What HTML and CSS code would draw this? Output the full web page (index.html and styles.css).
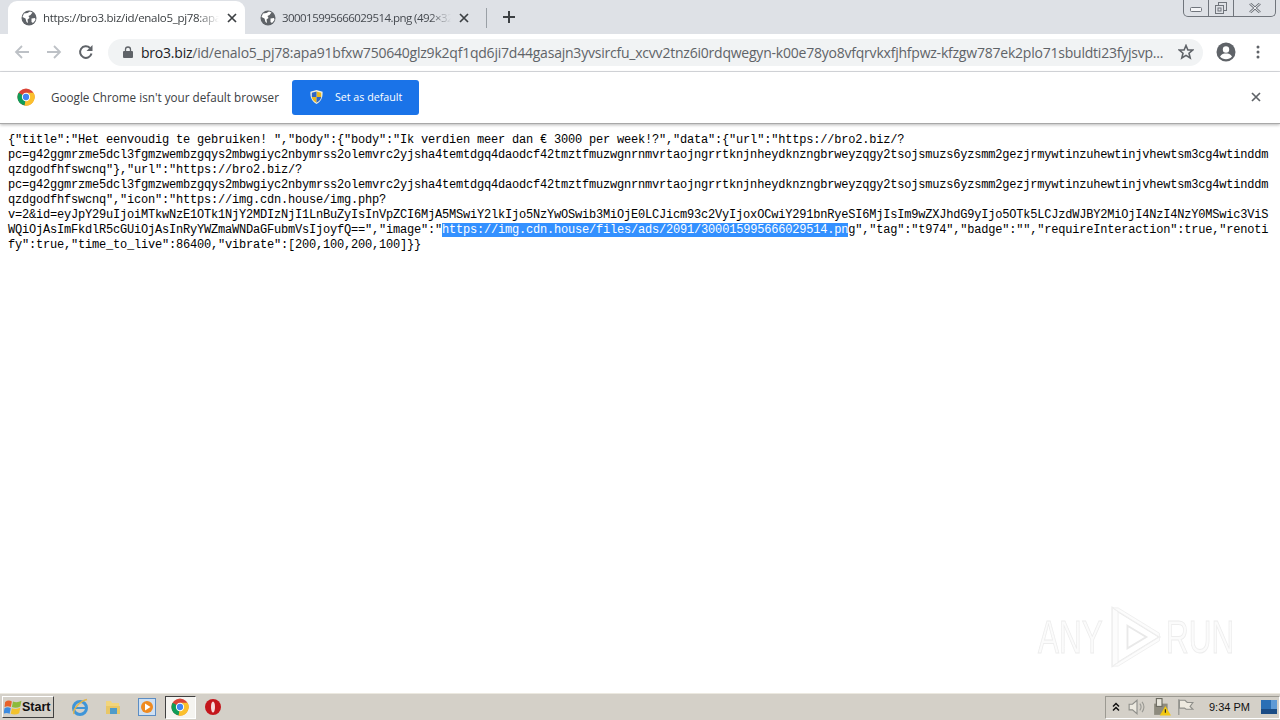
FILE: index.html
```html
<!DOCTYPE html>
<html lang="en">
<head>
<meta charset="utf-8">
<title>Chrome</title>
<link rel="stylesheet" href="styles.css">
</head>
<body>
<svg class="defs" width="0" height="0" aria-hidden="true">
  <defs>
    <symbol id="globe" viewBox="0 0 16 16">
      <circle cx="8" cy="8" r="7.5" fill="#5f6368"/>
      <path d="M3 3.5 6.5 3 9 1.5l2.5 1L9.5 5 7.5 6 8.5 8 6.5 9.5 7 13 5.5 12 4.5 8.5 1.5 7ZM10.5 8.5l3.500-.5.5 2-2.500 3-1.500-1Z" fill="#fff"/>
    </symbol>
    <symbol id="cross" viewBox="0 0 10 10">
      <path d="M1 1 9 9M9 1 1 9" fill="none" stroke="currentColor" stroke-width="1.700"/>
    </symbol>
    <symbol id="chrome" viewBox="0 0 20 20">
      <circle cx="10" cy="10" r="9.500" fill="#db4437"/>
      <path d="M10 10 1.800 5.200A9.500 9.500 0 0 0 8.500 19.400Z" fill="#0f9d58"/>
      <path d="M10 5.200h8.400A9.500 9.500 0 0 1 8.500 19.400L10 10Z" fill="#fbc02d"/>
      <circle cx="10" cy="10" r="4.600" fill="#fff"/>
      <circle cx="10" cy="10" r="3.500" fill="#4285f4"/>
    </symbol>
    <symbol id="shield" viewBox="0 0 16 16">
      <path d="M8 .5 14.500 2.500C14.800 9 12.500 13 8 15.500 3.500 13 1.200 9 1.500 2.500Z" fill="#f4f1e0"/>
      <path d="M8 2 13 3.500V8H8Z" fill="#e8b81e"/>
      <path d="M8 2 3 3.500V8H8Z" fill="#2f66c4"/>
      <path d="M3 8H8V14C5 12.500 3.400 10.500 3 8Z" fill="#e8b81e"/>
      <path d="M13 8H8V14C11 12.500 12.600 10.500 13 8Z" fill="#2f66c4"/>
    </symbol>
  </defs>
</svg>
<div class="screen">
  <header class="tabstrip">
    <div class="tab tab-active">
      <svg class="tab-favicon"><use href="#globe"/></svg>
      <span class="tab-title">https://bro3.biz/id/enalo5_pj78:apa91bfxw750</span>
      <svg class="tab-close"><use href="#cross"/></svg>
    </div>
    <div class="tab tab-idle">
      <svg class="tab-favicon"><use href="#globe"/></svg>
      <span class="tab-title">300015995666029514.png (492×328)</span>
      <svg class="tab-close"><use href="#cross"/></svg>
    </div>
    <span class="tab-sep"></span>
    <svg class="newtab" viewBox="0 0 12 12"><path d="M6 0V12M0 6H12" fill="none" stroke="#3c4043" stroke-width="2"/></svg>
    <div class="winbtns">
      <span class="winbtn winbtn-min"><svg viewBox="0 0 12 6" width="12" height="6"><rect x=".5" y=".5" width="11" height="4" rx="1" fill="#f4f5f7" stroke="#70757c"/></svg></span>
      <span class="winbtn winbtn-max"><svg viewBox="0 0 12 12" width="12" height="12"><rect x="3.500" y=".5" width="8" height="8" fill="none" stroke="#70757c"/><rect x=".5" y="3.500" width="8" height="8" fill="#dee1e6" stroke="#70757c"/><rect x="3" y="6" width="3" height="3" fill="none" stroke="#70757c"/></svg></span>
      <span class="winbtn winbtn-close"><svg viewBox="0 0 12 10" width="12" height="10"><path d="M1 .5 11 9.500M11 .5 1 9.500" fill="none" stroke="#70757c" stroke-width="2.600"/><path d="M1 .5 11 9.500M11 .5 1 9.500" fill="none" stroke="#f4f5f7" stroke-width="1"/></svg></span>
    </div>
  </header>

  <nav class="toolbar">
    <svg class="nav-icon" viewBox="0 0 16 16"><path d="M15 8H2M8 2 2 8l6 6" fill="none" stroke="#bdc1c6" stroke-width="1.800"/></svg>
    <svg class="nav-icon" viewBox="0 0 16 16"><path d="M1 8H14M8 2l6 6-6 6" fill="none" stroke="#bdc1c6" stroke-width="1.800"/></svg>
    <svg class="nav-icon" viewBox="0 0 16 16"><path d="M13.500 9.500A5.800 5.800 0 1 1 12 4" fill="none" stroke="#5f6368" stroke-width="2"/><path d="M14.500 1v6h-6Z" fill="#5f6368"/></svg>
    <div class="omnibox">
      <svg class="lock" viewBox="0 0 10 12"><path d="M2.500 5V3.500a2.500 2.500 0 0 1 5 0V5" fill="none" stroke="#5f6368" stroke-width="1.300"/><rect y="5" width="10" height="7" rx="1" fill="#5f6368"/></svg>
      <span class="url"><span class="url-host">bro3.biz</span>/id/enalo5_pj78:apa91bfxw750640glz9k2qf1qd6ji7d44gasajn3yvsircfu_xcvv2tnz6i0rdqwegyn-k00e78yo8vfqrvkxfjhfpwz-kfzgw787ek2plo71sbuldti23fyjsvp...</span>
      <svg class="star" viewBox="0 0 16 16"><path d="M8 1.500 9.900 6h4.800l-3.700 3.200 1.200 4.800L8 11.400 3.800 14 5 9.200 1.300 6h4.800Z" fill="none" stroke="#5f6368" stroke-width="1.600"/></svg>
    </div>
    <svg class="avatar" viewBox="0 0 20 20"><circle cx="10" cy="10" r="9.500" fill="#5f6368"/><circle cx="10" cy="7.500" r="3.200" fill="#fff"/><path d="M4 14.500c1.500-2.500 3.500-3 6-3s4.500.5 6 3c-1.500 1.800-3.500 2.700-6 2.700s-4.500-.9-6-2.700Z" fill="#fff"/></svg>
    <svg class="kebab" viewBox="0 0 4 14"><circle cx="2" cy="2" r="1.500" fill="#5f6368"/><circle cx="2" cy="7" r="1.500" fill="#5f6368"/><circle cx="2" cy="12" r="1.500" fill="#5f6368"/></svg>
  </nav>

  <section class="infobar">
    <svg class="info-logo"><use href="#chrome"/></svg>
    <span class="info-text">Google Chrome isn't your default browser</span>
    <button class="info-btn"><svg class="info-shield"><use href="#shield"/></svg><span>Set as default</span></button>
    <svg class="info-close"><use href="#cross"/></svg>
  </section>

  <main class="content">
<pre class="json">{"title":"Het eenvoudig te gebruiken! ","body":{"body":"Ik verdien meer dan € 3000 per week!?","data":{"url":"https://bro2.biz/?
pc=g42ggmrzme5dcl3fgmzwembzgqys2mbwgiyc2nbymrss2olemvrc2yjsha4temtdgq4daodcf42tmztfmuzwgnrnmvrtaojngrrtknjnheydknzngbrweyzqgy2tsojsmuzs6yzsmm2gezjrmywtinzuhewtinjvhewtsm3cg4wtinddm
qzdgodfhfswcnq"},"url":"https://bro2.biz/?
pc=g42ggmrzme5dcl3fgmzwembzgqys2mbwgiyc2nbymrss2olemvrc2yjsha4temtdgq4daodcf42tmztfmuzwgnrnmvrtaojngrrtknjnheydknzngbrweyzqgy2tsojsmuzs6yzsmm2gezjrmywtinzuhewtinjvhewtsm3cg4wtinddm
qzdgodfhfswcnq","icon":"https://img.cdn.house/img.php?
v=2&amp;id=eyJpY29uIjoiMTkwNzE1OTk1NjY2MDIzNjI1LnBuZyIsInVpZCI6MjA5MSwiY2lkIjo5NzYwOSwib3MiOjE0LCJicm93c2VyIjoxOCwiY291bnRyeSI6MjIsIm9wZXJhdG9yIjo5OTk5LCJzdWJBY2MiOjI4NzI4NzY0MSwic3ViS
WQiOjAsImFkdlR5cGUiOjAsInRyYWZmaWNDaGFubmVsIjoyfQ==","image":"<mark class="sel">https://img.cdn.house/files/ads/2091/300015995666029514.pn</mark>g","tag":"t974","badge":"","requireInteraction":true,"renoti
fy":true,"time_to_live":86400,"vibrate":[200,100,200,100]}}</pre>
    <div class="watermark">
      <span class="wm-word">ANY</span>
      <svg class="wm-play" viewBox="0 0 56 66"><path d="M4 2 54 33 4 64Z" fill="#fff" stroke="#e9e9e9" stroke-width="2"/><path d="M4 2 10 2 54 29V33ZM4 64 10 64 54 37V33ZM4 2 4 64 10 60 10 6Z" fill="#fcfcfc" stroke="#efefef"/><path d="M20 21 40 33 20 45Z" fill="#fff" stroke="#e9e9e9" stroke-width="2"/></svg>
      <span class="wm-word">RUN</span>
    </div>
  </main>

  <footer class="taskbar">
    <div class="start">
      <svg class="start-flag" viewBox="0 0 16 14"><path d="M1 2.500C3 1 5 1 7 2L6 7C4 6 2.500 6 .5 7Z" fill="#e8622a"/><path d="M8 2C10 3 13 3 15.500 1.500L14.500 6.500C12 8 9.500 8 7 7Z" fill="#8cbb3a"/><path d="M.5 8C2.500 7 4 7 6 8L5 13C3 12 1.500 12-.5 13Z" fill="#3d8be0"/><path d="M7 8C9.500 9 12 9 14.500 7.500L13.500 12.500C11 14 8.500 14 6 13Z" fill="#f3c22d"/></svg>
      <span>Start</span>
    </div>
    <div class="quick">
      <span class="quick-item"><svg viewBox="0 0 18 18"><circle cx="9" cy="10" r="6.500" fill="none" stroke="#3f95d8" stroke-width="3"/><path d="M4 10H15" stroke="#3f95d8" stroke-width="2"/><path d="M3 16C1 12 9 3 16 1.500" fill="none" stroke="#e3b54a" stroke-width="1.500"/></svg></span>
      <span class="quick-item"><svg viewBox="0 0 18 18"><path d="M2 3H7L8 5H15V16H2Z" fill="#f2d57c"/><path d="M2 8H16V16H2Z" fill="#e9c766"/><rect x="6" y="10" width="7" height="6" fill="#4f9bc9"/></svg></span>
      <span class="quick-item"><svg viewBox="0 0 18 18"><rect x=".5" y=".5" width="17" height="17" fill="#cfe0f2" stroke="#5b8dc4"/><circle cx="9" cy="9" r="6" fill="#ef8a1f"/><path d="M7 5.500 12.500 9 7 12.500Z" fill="#fff"/></svg></span>
      <span class="quick-item quick-active"><svg viewBox="0 0 20 20"><use href="#chrome"/></svg></span>
      <span class="quick-item"><svg viewBox="0 0 18 18"><circle cx="9" cy="9" r="8" fill="#c4161c"/><ellipse cx="9" cy="9" rx="2" ry="5.500" fill="#f6dcdc"/></svg></span>
    </div>
    <div class="tray">
      <svg class="tray-chev" viewBox="0 0 8 10"><path d="M1 4.500 4 1.500 7 4.500M1 8.500 4 5.500 7 8.500" fill="none" stroke="#111" stroke-width="1.500"/></svg>
      <svg class="tray-icon" viewBox="0 0 16 16"><path d="M1 5.500H4L8 2V14L4 10.500H1Z" fill="#ece9e0" stroke="#8f8f8a"/><path d="M10.500 5c1.500 2 1.500 4 0 6M12.500 3.500c2.200 3 2.200 6 0 9" fill="none" stroke="#9a9a94"/></svg>
      <svg class="tray-icon" viewBox="0 0 16 16"><rect x="1" y="5" width="12" height="10" fill="#8e8b7e"/><rect x="3" y=".5" width="5" height="7" fill="#e8e6dc" stroke="#6b6a60"/><path d="M11 7 16 15.500H6Z" fill="#f2c811"/><path d="M11 10v3" stroke="#222"/></svg>
      <svg class="tray-icon tray-flag" viewBox="0 0 16 16"><path d="M2.500 1V15" stroke="#8f8f8a"/><path d="M3 2H8L10 4H15L12.500 7.500 15 10H9L7.500 9H3Z" fill="#eeeae0" stroke="#8f8f8a"/></svg>
      <span class="clock">9:34 PM</span>
      <svg class="tray-desk" viewBox="0 0 16 14"><rect width="16" height="14" fill="#2a6fb5"/><rect y="9" width="16" height="5" fill="#1b4c85"/><rect x="10" width="6" height="9" fill="#5e9ad6"/></svg>
    </div>
  </footer>
</div>
</body>
</html>
```
FILE: styles.css
```css
* { box-sizing: border-box; }
html, body { margin: 0; padding: 0; }
body { font-family: "Open Sans", "Liberation Sans", sans-serif; background: #fff; overflow: hidden; }
.defs { display: block; height: 0; }
.screen { width: 1280px; height: 720px; display: flex; flex-direction: column; overflow: hidden; }

/* Tab strip */
.tabstrip { height: 34px; flex: none; background: #dee1e6; display: flex; align-items: flex-end; padding-left: 8px; }
.tab { height: 33px; display: flex; align-items: center; font-size: 11.500px; color: #3c4043; }
.tab-active { width: 237px; background: #fff; border-radius: 9px 9px 0 0; padding: 0 8px 0 13px; letter-spacing: -.3px; }
.tab-idle { width: 231px; padding: 0 8px 0 14px; margin-left: 1px; color: #45494f; letter-spacing: -.55px; }
.tab-favicon { width: 16px; height: 16px; flex: none; margin-right: 6px; }
.tab-title { flex: 1; min-width: 0; white-space: nowrap; overflow: hidden; -webkit-mask-image: linear-gradient(90deg, #000 88%, transparent); mask-image: linear-gradient(90deg, #000 88%, transparent); }
.tab-close { width: 10px; height: 10px; flex: none; margin-left: 8px; color: #3c4043; }
.tab-sep { width: 1px; height: 20px; background: #9aa0a6; margin: 0 0 6px 9px; flex: none; }
.newtab { width: 12px; height: 12px; margin: 0 0 11px 16px; flex: none; }
.winbtns { margin-left: auto; margin-right: 4px; align-self: flex-start; width: 93px; height: 17px; display: flex; border: 1px solid #70757c; border-top: 0; border-radius: 0 0 5px 5px; }
.winbtn { display: flex; align-items: center; justify-content: center; }
.winbtn-min { width: 25px; border-right: 1px solid #70757c; padding-top: 3px; }
.winbtn-max { width: 25px; border-right: 1px solid #70757c; }
.winbtn-close { flex: 1; }

/* Toolbar */
.toolbar { height: 38px; flex: none; background: #fff; border-bottom: 1px solid #dadce0; display: flex; align-items: center; padding: 0 0 1px 14px; }
.nav-icon { width: 16px; height: 16px; margin-right: 16px; flex: none; }
.nav-icon:nth-of-type(3) { margin-right: 14px; }
.omnibox { width: 1095px; height: 27px; background: #f1f3f4; border-radius: 14px; display: flex; align-items: center; padding: 0 9px 0 15px; flex: none; }
.lock { width: 10px; height: 12px; flex: none; margin-right: 8px; }
.url { flex: 1; min-width: 0; white-space: nowrap; overflow: hidden; font-size: 14px; letter-spacing: -.22px; color: #5f6368; }
.url-host { color: #202124; }
.star { width: 16px; height: 16px; flex: none; margin-left: 14px; }
.avatar { width: 20px; height: 20px; flex: none; margin-left: 13px; }
.kebab { width: 4px; height: 14px; flex: none; margin-left: 20px; }

/* Infobar */
.infobar { height: 52px; flex: none; background: #fff; border-bottom: 1px solid #a8a8a8; box-shadow: 0 1px 3px rgba(0,0,0,.28); display: flex; align-items: center; padding: 0 17px 1px; position: relative; z-index: 1; }
.info-logo { width: 18px; height: 18px; flex: none; }
.info-text { margin-left: 16px; font-size: 11.700px; line-height: 16px; padding-bottom: 1px; color: #3c4043; white-space: nowrap; }
.info-btn { margin-left: 13px; width: 127px; height: 35px; border: 0; border-radius: 3px; background: #1a73e8; color: #fff; font: 400 10.700px "Open Sans", sans-serif; display: flex; align-items: center; padding: 0 0 1px 17px; }
.info-shield { width: 15px; height: 16px; flex: none; margin-right: 11px; }
.info-close { width: 10px; height: 10px; margin-left: auto; margin-right: 2px; color: #5f6368; }

/* Content */
.content { flex: 1; min-height: 0; background: #fff; position: relative; padding: 9px 8px 0; }
.json { margin: 0; font: 12px/15px "Liberation Mono", "DejaVu Sans Mono", monospace; letter-spacing: -.2px; color: #000; white-space: pre; }
.sel { background: #3390ff; color: #fff; }
.watermark { position: absolute; left: 1038px; top: 482px; display: flex; align-items: center; font: 400 47px/62px "Liberation Sans", sans-serif; color: #fbfbfb; -webkit-text-stroke: 1px #ededed; }
.wm-word { width: 64px; white-space: nowrap; transform: scaleX(.67); transform-origin: left center; }
.wm-play { width: 54px; height: 62px; margin: 0 4px 0 6px; flex: none; }

/* Taskbar */
.taskbar { height: 27px; flex: none; background: #d4d0c8; border-top: 1px solid #ece9e0; display: flex; align-items: center; position: relative; }
.start { width: 52px; height: 22px; margin-left: 2px; display: flex; align-items: center; padding-left: 1px; background: #d4d0c8; border: 1px solid; border-color: #fff #404040 #404040 #fff; font: 700 12.500px "Liberation Sans", sans-serif; color: #111; flex: none; }
.start-flag { width: 18px; height: 16px; flex: none; }
.quick { display: flex; align-items: center; margin-left: 9px; }
.quick-item { width: 33.500px; height: 22px; display: flex; align-items: center; justify-content: center; flex: none; }
.quick-item svg { width: 18px; height: 18px; }
.quick-active { width: 31px; height: 23px; margin: 0 1px; background: #f5f4f0; border: 1px solid; border-color: #404040 #fff #fff #404040; }
.tray { margin-left: auto; width: 175px; height: 23px; border: 1px solid; border-color: #9c9a92 #fff #fff #9c9a92; display: flex; align-items: center; padding-left: 6px; }
.tray-chev { width: 8px; height: 10px; flex: none; margin-right: 8px; }
.tray-icon { width: 18px; height: 18px; flex: none; margin-right: 7px; }
.tray-flag { margin-left: -2px; }
.clock { font: 400 11px "Liberation Sans", sans-serif; color: #111; margin-left: 8px; white-space: nowrap; }
.tray-desk { width: 16px; height: 14px; flex: none; margin-left: auto; margin-right: 2px; }
```
